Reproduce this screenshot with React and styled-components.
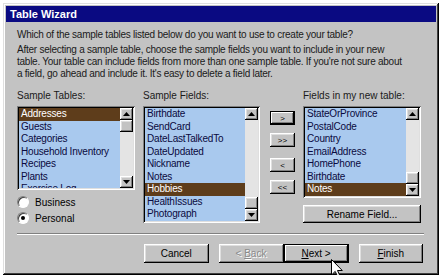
import React from "react";
import styled, { createGlobalStyle, css } from "styled-components";

const GlobalStyle = createGlobalStyle`
	body {
		margin: 0;
		background: #fff;
		font-family: "Liberation Sans", Arial, sans-serif;
		font-size: 10px;
		color: #000;
	}
`;

const raised = css`
	box-shadow: inset -1px -1px #000, inset 1px 1px #fff, inset -2px -2px #808080,
		inset 2px 2px #dfdfdf;
`;

const sunken = css`
	box-shadow: inset 1px 1px #808080, inset -1px -1px #fff, inset 2px 2px #000,
		inset -2px -2px #dfdfdf;
`;

const sampleTables = [
	"Addresses",
	"Guests",
	"Categories",
	"Household Inventory",
	"Recipes",
	"Plants",
	"Exercise Log",
];

const sampleFields = [
	"Birthdate",
	"SendCard",
	"DateLastTalkedTo",
	"DateUpdated",
	"Nickname",
	"Notes",
	"Hobbies",
	"HealthIssues",
	"Photograph",
];

const newFields = [
	"StateOrProvince",
	"PostalCode",
	"Country",
	"EmailAddress",
	"HomePhone",
	"Birthdate",
	"Notes",
];

const Arrow = ({ down }) => (
	<svg width="7" height="4" viewBox="0 0 7 4">
		{down ? (
			<polygon points="0,0 7,0 3.5,4" fill="#000" />
		) : (
			<polygon points="0,4 7,4 3.5,0" fill="#000" />
		)}
	</svg>
);

const ListBox = ({ items, selected, height, thumbAt }) => (
	<Box $height={height}>
		<Items>
			{items.map((item, i) => (
				<Item key={i} $selected={item === selected}>
					{item}
				</Item>
			))}
		</Items>
		<Scrollbar>
			<ScrollButton>
				<Arrow />
			</ScrollButton>
			<Track $at={thumbAt}>
				<Thumb />
			</Track>
			<ScrollButton>
				<Arrow down />
			</ScrollButton>
		</Scrollbar>
	</Box>
);

const Cursor = () => (
	<CursorWrap>
		<svg width="12" height="19" viewBox="0 0 12 19">
			<path
				d="M0.5 0.5 L0.5 16 L4.2 12.4 L7 18.3 L9.2 17.3 L6.5 11.5 L11.3 11.5 Z"
				fill="#fff"
				stroke="#000"
				strokeWidth="1"
			/>
		</svg>
	</CursorWrap>
);

const App = () => {
	return (
		<>
			<GlobalStyle />
			<Window>
				<TitleBar>Table Wizard</TitleBar>
				<Body>
					<Question>
						Which of the sample tables listed below do you want to use to
						create your table?
					</Question>
					<Intro>
						After selecting a sample table, choose the sample fields you want
						to include in your new
						<br />
						table. Your table can include fields from more than one sample
						table. If you're not sure about
						<br />
						a field, go ahead and include it. It's easy to delete a field
						later.
					</Intro>
					<Main>
						<Column>
							<Label>Sample Tables:</Label>
							<ListBox
								items={sampleTables}
								selected="Addresses"
								height={84}
								thumbAt="start"
							/>
							<Radios>
								<RadioRow>
									<Radio />
									Business
								</RadioRow>
								<RadioRow>
									<Radio $checked />
									Personal
								</RadioRow>
							</Radios>
						</Column>
						<Column>
							<Label>Sample Fields:</Label>
							<ListBox
								items={sampleFields}
								selected="Hobbies"
								height={117}
								thumbAt="end"
							/>
						</Column>
						<Movers>
							<MoveButton $focused>&gt;</MoveButton>
							<MoveButton $gap={8}>&gt;&gt;</MoveButton>
							<MoveButton $gap={11}>&lt;</MoveButton>
							<MoveButton $gap={8}>&lt;&lt;</MoveButton>
						</Movers>
						<Column>
							<Label>Fields in my new table:</Label>
							<ListBox
								items={newFields}
								selected="Notes"
								height={92}
								thumbAt="end"
							/>
							<RenameButton>Rename Field...</RenameButton>
						</Column>
					</Main>
					<Separator />
					<Footer>
						<Button>Cancel</Button>
						<ButtonPair>
							<Button disabled>
								&lt; <u>B</u>ack
							</Button>
							<Button $default>
								<u>N</u>ext &gt;
							</Button>
						</ButtonPair>
						<Button>
							<u>F</u>inish
						</Button>
						<Cursor />
					</Footer>
				</Body>
			</Window>
		</>
	);
};

export default App;

const Window = styled.div`
	margin: 3px 0 0 3px;
	width: 436px;
	height: 272px;
	box-sizing: border-box;
	padding: 3px;
	background: #c3c3c3;
	box-shadow: inset -1px -1px #000, inset 1px 1px #dfdfdf,
		inset -2px -2px #404040, inset 2px 2px #fff;
	display: flex;
	flex-direction: column;
`;

const TitleBar = styled.div`
	height: 16px;
	line-height: 16px;
	padding-left: 4px;
	background: #0a0a82;
	color: #fff;
	font-weight: bold;
	font-size: 11px;
`;

const Body = styled.div`
	flex: 1;
	padding: 7px 13px 0 11px;
	display: flex;
	flex-direction: column;
`;

const Question = styled.div`
	line-height: 12px;
	letter-spacing: -0.25px;
	color: #1a1a1a;
`;

const Intro = styled.div`
	margin-top: 3px;
	line-height: 12px;
	letter-spacing: -0.25px;
	white-space: nowrap;
	color: #1a1a1a;
`;

const Main = styled.div`
	margin-top: 10px;
	display: grid;
	grid-template-columns: 118px 117px 27px 118px;
	column-gap: 8px;
	align-items: start;
`;

const Column = styled.div`
	display: flex;
	flex-direction: column;
`;

const Label = styled.div`
	line-height: 12px;
	margin-bottom: 4px;
	color: #1a1a1a;
`;

const Box = styled.div`
	height: ${(p) => p.$height}px;
	box-sizing: border-box;
	padding: 2px;
	background: #a9c9ee;
	${sunken};
	display: flex;
	overflow: hidden;
`;

const Items = styled.div`
	flex: 1;
	overflow: hidden;
	min-width: 0;
`;

const Item = styled.div`
	height: 12.5px;
	line-height: 12.5px;
	padding-left: 2px;
	letter-spacing: -0.2px;
	white-space: nowrap;
	color: ${(p) => (p.$selected ? "#fff" : "#0a0a40")};
	background: ${(p) => (p.$selected ? "#5e3d1b" : "transparent")};
`;

const Scrollbar = styled.div`
	width: 13px;
	display: flex;
	flex-direction: column;
`;

const ScrollButton = styled.div`
	height: 12px;
	background: #c3c3c3;
	${raised};
	display: flex;
	align-items: center;
	justify-content: center;
`;

const Track = styled.div`
	flex: 1;
	background: #e4e4e4;
	display: flex;
	flex-direction: column;
	justify-content: ${(p) => (p.$at === "end" ? "flex-end" : "flex-start")};
`;

const Thumb = styled.div`
	height: 12px;
	background: #c3c3c3;
	${raised};
`;

const Radios = styled.div`
	margin-top: 4px;
	display: flex;
	flex-direction: column;
`;

const RadioRow = styled.div`
	height: 16px;
	display: flex;
	align-items: center;
	gap: 6px;
`;

const Radio = styled.span`
	width: 12px;
	height: 12px;
	border-radius: 50%;
	box-sizing: border-box;
	background: #fff;
	border: 1px solid;
	border-color: #808080 #fff #fff #808080;
	box-shadow: inset 1px 1px #404040;
	display: flex;
	align-items: center;
	justify-content: center;
	&::after {
		content: "";
		width: 4px;
		height: 4px;
		border-radius: 50%;
		background: #000;
		display: ${(p) => (p.$checked ? "block" : "none")};
	}
`;

const Movers = styled.div`
	padding-top: 21px;
	display: flex;
	flex-direction: column;
	margin-left: 2px;
`;

const MoveButton = styled.button`
	margin-top: ${(p) => p.$gap || 0}px;
	height: 14px;
	padding: 0;
	border: none;
	background: #c3c3c3;
	font-family: "Liberation Sans", Arial, sans-serif;
	font-size: 8px;
	color: #000;
	${raised};
	${(p) =>
		p.$focused &&
		css`
			box-shadow: inset 0 0 0 1px #000, inset -2px -2px #000,
				inset 2px 2px #fff, inset -3px -3px #808080;
		`}
`;

const RenameButton = styled.button`
	margin-top: 7px;
	height: 18px;
	padding: 0;
	border: none;
	background: #c3c3c3;
	font-family: "Liberation Sans", Arial, sans-serif;
	font-size: 10px;
	color: #000;
	${raised};
`;

const Separator = styled.div`
	margin-top: 7px;
	height: 0;
	border-top: 1px solid #808080;
	border-bottom: 1px solid #fff;
	margin-right: -1px;
`;

const Footer = styled.div`
	margin-top: 9px;
	display: flex;
	justify-content: flex-end;
	gap: 10px;
	padding-left: 127px;
	position: relative;
`;

const ButtonPair = styled.div`
	display: flex;
`;

const Button = styled.button`
	width: 65px;
	height: 19px;
	padding: 0;
	border: none;
	background: #c3c3c3;
	font-family: "Liberation Sans", Arial, sans-serif;
	font-size: 10px;
	color: #000;
	${raised};
	&:disabled {
		color: #8a8a8a;
		text-shadow: 1px 1px #fff;
	}
	${(p) =>
		p.$default &&
		css`
			box-shadow: inset 0 0 0 1px #000, inset -2px -2px #000,
				inset 2px 2px #fff, inset -3px -3px #808080;
		`}
`;

const CursorWrap = styled.div`
	position: absolute;
	left: 314px;
	top: 15px;
	line-height: 0;
`;
